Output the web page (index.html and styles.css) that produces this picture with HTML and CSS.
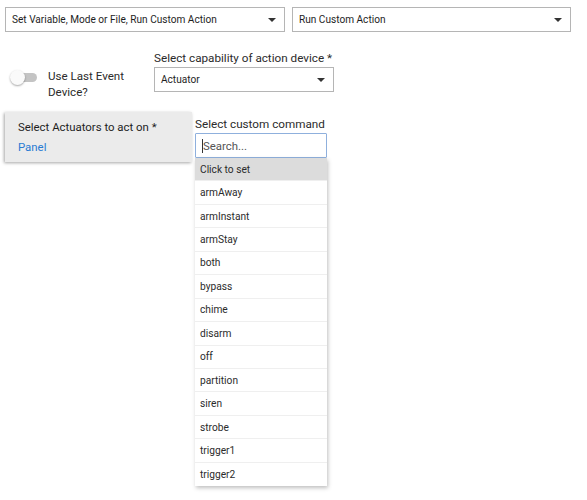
FILE: index.html
```html
<!DOCTYPE html>
<html>
<head>
<meta charset="utf-8">
<link rel="stylesheet" href="styles.css">
</head>
<body>
<div class="page">
  <div class="row-top">
    <div class="select wide1"><span>Set Variable, Mode or File, Run Custom Action</span><span class="caret"></span></div>
    <div class="select wide2"><span>Run Custom Action</span><span class="caret"></span></div>
  </div>
  <div class="row-mid">
    <div class="toggle-wrap">
      <div class="toggle"><span class="track"></span><span class="knob"></span></div>
      <div class="toggle-label">Use Last Event<br>Device?</div>
    </div>
    <div class="cap">
      <div class="label">Select capability of action device *</div>
      <div class="select cap-select"><span>Actuator</span><span class="caret"></span></div>
    </div>
  </div>
  <div class="row-bot">
    <div class="card">
      <div class="card-title">Select Actuators to act on *</div>
      <div class="card-link">Panel</div>
    </div>
    <div class="cmd">
      <div class="label">Select custom command</div>
      <div class="search"><span class="cursor"></span><span class="ph">Search...</span></div>
      <ul class="menu">
        <li class="active">Click to set</li>
        <li>armAway</li>
        <li>armInstant</li>
        <li>armStay</li>
        <li>both</li>
        <li>bypass</li>
        <li>chime</li>
        <li>disarm</li>
        <li>off</li>
        <li>partition</li>
        <li>siren</li>
        <li>strobe</li>
        <li>trigger1</li>
        <li>trigger2</li>
      </ul>
    </div>
  </div>
</div>
</body>
</html>
```

FILE: styles.css
```css
* { box-sizing: border-box; }
html, body { margin: 0; background: #fff; }
body { font-family: Roboto, "Noto Sans", sans-serif; color: #222; }
.page { width: 587px; height: 500px; }

.row-top { display: flex; gap: 7px; padding: 7px 0 0 5px; }
.select {
  height: 25px; border: 1px solid #b5b5b5; background: #fff;
  display: flex; align-items: center; justify-content: space-between;
  padding: 0 6px 0 6px; font-size: 10.1px; color: #1e1e1e; white-space: nowrap;
}
.wide1 { width: 280px; }
.wide2 { width: 279px; }
.caret { width: 0; height: 0; border-left: 4.5px solid transparent; border-right: 4.5px solid transparent; border-top: 4.5px solid #333; margin-right: 2px; margin-top: 1px; }

.row-mid { display: flex; padding: 18px 0 0 10px; }
.toggle-wrap { display: flex; align-items: flex-start; width: 144px; padding-top: 18px; }
.toggle { position: relative; width: 28px; height: 16px; margin-top: 2px; }
.track { position: absolute; left: 2px; top: 3px; width: 25px; height: 9px; border-radius: 5px; background: #c4c4c4; }
.knob { position: absolute; left: 0; top: 0; width: 15px; height: 15px; border-radius: 50%; background: #fafafa; box-shadow: 0 1px 2px rgba(0,0,0,.35); }
.toggle-label { margin-left: 10px; font-size: 11.6px; line-height: 16px; color: #2b2b2b; }

.cap { display: flex; flex-direction: column; }
.label { font-size: 11.7px; color: #2b2b2b; line-height: 15px; white-space: nowrap; }
.cap .label { margin-bottom: 1px; margin-top: 1px; }
.cap-select { width: 180px; height: 25px; }

.row-bot { display: flex; padding: 12px 0 0 5px; }
.card {
  width: 187px; height: 50px; background: #ebebeb;
  box-shadow: -1px 1px 3px rgba(0,0,0,.35);
  padding: 8px 0 0 13px;
}
.card-title { font-size: 11.4px; color: #1e1e1e; line-height: 14px; }
.card-link { font-size: 11.4px; color: #2a7bd3; line-height: 14px; margin-top: 6px; }

.cmd { position: relative; margin-left: 3px; margin-top: 5px; width: 132px; }
.cmd .label { margin-bottom: 1px; }
.search {
  width: 132px; height: 25px; border: 1px solid #8fb0dd; border-radius: 1px;
  display: flex; align-items: center; padding-left: 6px; font-size: 11.4px; color: #555;
}
.cursor { width: 1px; height: 14px; background: #333; }
.menu {
  position: absolute; left: 0; top: 41px; width: 132px; margin: 0; padding: 0;
  list-style: none; background: #fff; box-shadow: 1px 2px 4px rgba(0,0,0,.25);
}
.menu li {
  height: 23.45px; border-bottom: 1px solid #efefef; font-size: 10.2px; color: #2b2b2b;
  display: flex; align-items: center; padding-left: 5px;
}
.menu li:last-child { border-bottom: none; }
.menu li.active { background: #dcdcdc; }
```
